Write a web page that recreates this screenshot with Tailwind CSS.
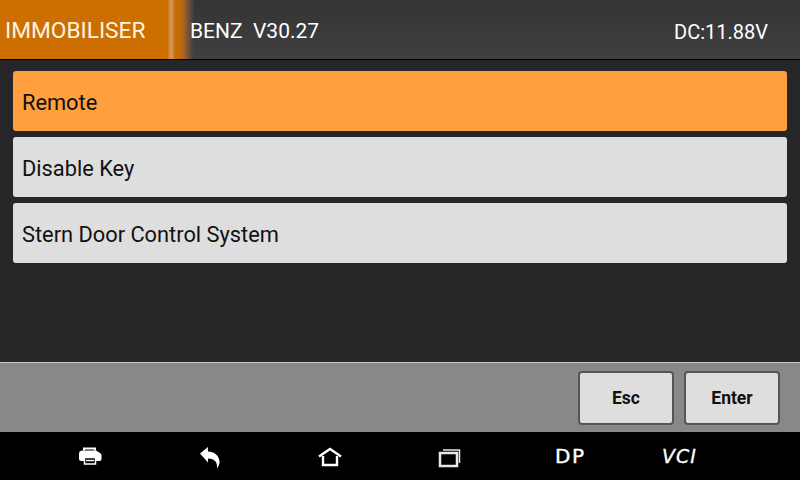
<!DOCTYPE html>
<html lang="en">

<head>
    <meta charset="UTF-8">
    <title>Immobiliser</title>
    <script src="https://cdn.jsdelivr.net/npm/@tailwindcss/browser@4"></script>
</head>

<body class="bg-[#262628]">
    <div class="flex flex-col w-[800px] h-[480px] overflow-hidden font-['Roboto',sans-serif]">
        <!-- header -->
        <header class="flex h-[60px] shrink-0 border-b border-black bg-gradient-to-b from-[#343434] to-[#404040] text-white">
            <div class="flex items-center w-[168px] pl-[5px] pt-[4px] bg-[#cc6e00] text-[#fff3e0] text-[22.700px]">IMMOBILISER</div>
            <div class="w-[26px] bg-gradient-to-r from-[#cc6e00] via-[#c26c08] to-[#3c3c3c] relative">
                <div class="absolute left-0 top-0 bottom-0 w-[7px] bg-gradient-to-r from-[#cc7a1a] via-[#d89a55] to-[#c26c08]"></div>
            </div>
            <div class="flex items-center flex-1 justify-between pr-[32px] pt-[4px]">
                <span class="relative z-10 -ml-[4px] whitespace-pre text-[21px]">BENZ  V30.27</span>
                <span class="text-[20px]">DC:11.88V</span>
            </div>
        </header>

        <!-- menu -->
        <main class="flex flex-col flex-1 gap-[6px] px-[13px] pt-[11px] text-[21.800px] text-[#111111]">
            <div class="flex items-center h-[60px] pl-[9px] pt-[4px] rounded-[3px] bg-[#ff9f3e]">Remote</div>
            <div class="flex items-center h-[60px] pl-[9px] pt-[4px] rounded-[3px] bg-[#dedede]">Disable Key</div>
            <div class="flex items-center h-[60px] pl-[9px] pt-[4px] rounded-[3px] bg-[#dedede]">Stern Door Control System</div>
        </main>

        <!-- buttons -->
        <div class="flex justify-end items-center gap-[10px] h-[70px] shrink-0 pr-[20px] pt-[1px] border-t border-[#c8c8c8] bg-[#888888]">
            <button class="w-[96px] h-[54px] rounded-[4px] border-2 border-[#555555] bg-[#dedede] text-[17.500px] font-bold text-[#111111]">Esc</button>
            <button class="w-[96px] h-[54px] rounded-[4px] border-2 border-[#555555] bg-[#dedede] text-[17.500px] font-bold text-[#111111]">Enter</button>
        </div>

        <!-- nav bar -->
        <nav class="relative h-[48px] shrink-0 bg-black text-white">
            <svg class="absolute left-[78px] top-[14px]" width="24" height="20" viewBox="0 0 24 20" fill="none">
                <path d="M6 4.500V2.500h11V4.500" stroke="#fff" stroke-width="2"/>
                <path d="M4 4.500h14l4 2.500c1 .6 1.500 1.500 1.500 2.500v3.500a2 2 0 0 1-2 2H18v-3H6v3H3a2 2 0 0 1-2-2V8a3.500 3.500 0 0 1 3-3.500z" fill="#fff"/>
                <path d="M6.500 11.500v6.500h11v-6.500z" stroke="#fff" stroke-width="1.500" fill="#000"/>
                <path d="M8 14.500h8" stroke="#fff" stroke-width="1.500"/>
            </svg>
            <svg class="absolute left-[199px] top-[14px]" width="22" height="24" viewBox="0 0 22 24" fill="none">
                <path d="M1 7.500 9 1v4.500c6 .2 11 3.800 11.500 9.800.2 2.200-.6 4.500-2.500 7.200.6-6-2-9.700-9-9.900v3.900z" fill="#fff"/>
            </svg>
            <svg class="absolute left-[318px] top-[15px]" width="24" height="20" viewBox="0 0 24 20" fill="none">
                <path d="M1 9.500 12 2l11 7.500" stroke="#fff" stroke-width="2.400"/>
                <path d="M5 9v9h14V9" stroke="#fff" stroke-width="2.400"/>
            </svg>
            <svg class="absolute left-[438px] top-[16px]" width="24" height="20" viewBox="0 0 24 20" fill="none">
                <rect x="2" y="5" width="17" height="13" stroke="#e8e8e8" stroke-width="2.500"/>
                <path d="M5 2h16.500v13" stroke="#e8e8e8" stroke-width="1.500"/>
            </svg>
            <span class="absolute left-[555px] top-[12px] font-['DejaVu_Sans',sans-serif] text-[20px] leading-[24px] tracking-[1.500px] [-webkit-text-stroke:0.4px_#fff]">DP</span>
            <span class="absolute left-[662px] top-[13px] font-['DejaVu_Sans',sans-serif] italic text-[19px] leading-[22px] tracking-[1px] [-webkit-text-stroke:0.3px_#fff]">VCI</span>
        </nav>
    </div>
</body>

</html>
